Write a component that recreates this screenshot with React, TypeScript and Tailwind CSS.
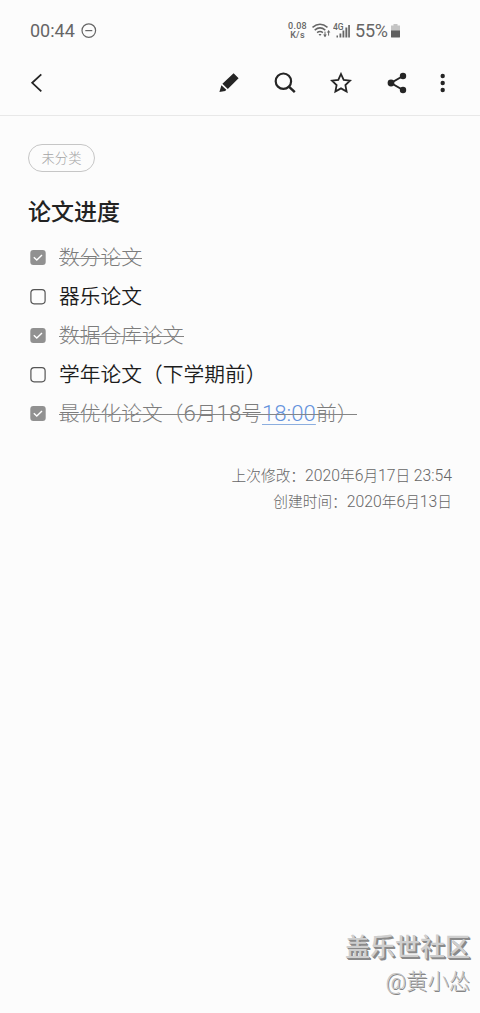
import React from 'react';

interface NoteItem {
  text: string;
  link?: string;
  tail?: string;
  done: boolean;
}

const ITEMS: NoteItem[] = [
  { text: '数分论文', done: true },
  { text: '器乐论文', done: false },
  { text: '数据仓库论文', done: true },
  { text: '学年论文（下学期前）', done: false },
  { text: '最优化论文（6月18号', link: '18:00', tail: '前）', done: true },
];

// Latin digits run slightly larger than the CJK glyphs around them
function Mixed({ text }: { text: string }) {
  return (
    <>
      {text.split(/([0-9:]+)/).map((part, i) =>
        i % 2 ? (
          <span key={i} className="text-[1.07em] leading-none">
            {part}
          </span>
        ) : (
          part
        )
      )}
    </>
  );
}

function StatusBar() {
  return (
    <div className="flex h-[50px] items-center pt-3 text-[#666]">
      <span className="ml-[30px] w-[45px] whitespace-nowrap text-[18px] leading-none">00:44</span>
      <svg className="ml-[6px]" width="16" height="16" viewBox="0 0 16 16" fill="none" stroke="currentColor" strokeWidth="1.2">
        <circle cx="7.8" cy="7.6" r="6.8" />
        <path d="M4.3 7.6h7" />
      </svg>
      <div className="ml-[190px] w-[21px] text-center text-[9px] leading-[9px] font-medium tracking-[0.3px]">
        <div>0.08</div>
        <div>K/s</div>
      </div>
      <svg className="ml-[4px]" width="20" height="16" viewBox="0 0 20 16" fill="none" stroke="currentColor" strokeWidth="1.5">
        <path d="M0.5 4.3Q8-1.9 15.5 4.3M2.7 7.1q5.3-4.4 10.6 0M5.1 9.6q2.9-2.3 5.8 0" />
        <path d="M6.5 10.9h3L8 12.9z" fill="currentColor" stroke="none" />
        <path d="M13 8.6v5M16.6 7.6v5" strokeWidth="1" />
        <path d="M11.2 11.6h3.6L13 14.2zM14.8 9.6h3.6l-1.8-2.4z" fill="currentColor" stroke="none" />
      </svg>
      <svg className="ml-[1px]" width="18" height="16" viewBox="0 0 18 16" fill="currentColor">
        <text x="0" y="7" fontSize="8.5" fontWeight="500">4G</text>
        <path d="M3.5 12.5H5v2H3.5zM6.5 10.5h1.8v4H6.5zM9.5 7.5h1.8v7H9.5zM12.4 4.5h1.9v10h-1.9zM15.2 2h1.7v12.5h-1.7z" />
      </svg>
      <span className="ml-[4px] w-[34px] whitespace-nowrap text-[18px] leading-none tracking-[-0.2px]">55%</span>
      <svg className="ml-[2px]" width="9" height="14" viewBox="0 0 9 14">
        <path d="M2.5 0h4v1.5H9V7H0V1.5h2.5z" fill="#c4c4c4" />
        <path d="M0 6.5h9V13q0 .5-1 .5H1q-1 0-1-.5z" fill="#606060" />
      </svg>
    </div>
  );
}

function Toolbar() {
  return (
    <header className="flex h-[66px] items-center border-b border-[#e8e8e8] text-[#252525]">
      <svg className="ml-7" width="18" height="22" viewBox="0 0 18 22" fill="none" stroke="currentColor" strokeWidth="1.8">
        <path d="M13.3 2.3 4.2 10.8l9.1 8.5" />
      </svg>
      <svg className="ml-[172px]" width="22" height="22" viewBox="0 0 22 22" fill="currentColor">
        <path d="M15.6 1.2 20.6 6.2 9.8 17 4.4 11.8zM3.4 13.2l4.9 4.6-1.1 1.3-5.8 1z" />
      </svg>
      <svg className="ml-[34px]" width="22" height="22" viewBox="0 0 22 22" fill="none" stroke="currentColor" strokeWidth="2.2">
        <circle cx="9.4" cy="9.2" r="7.7" />
        <path d="m14.6 14.4 6.2 5.8" strokeWidth="2.5" />
      </svg>
      <svg className="ml-[34px]" width="22" height="22" viewBox="0 0 22 22" fill="none" stroke="currentColor" strokeWidth="1.8">
        <path d="m11 2 2.7 5.9 6.4.7-4.7 4.5 1.2 6.5L11 16.4l-5.6 3.2 1.2-6.5-4.7-4.5 6.4-.7z" />
      </svg>
      <svg className="ml-[34px]" width="22" height="22" viewBox="0 0 22 22" fill="currentColor">
        <path d="M17 4 5 11l12 7" fill="none" stroke="currentColor" strokeWidth="2" />
        <circle cx="17" cy="4" r="3.2" />
        <circle cx="5" cy="11" r="3.4" />
        <circle cx="17" cy="18" r="3.2" />
      </svg>
      <svg className="ml-[32px]" width="6" height="22" viewBox="0 0 6 22" fill="currentColor">
        <circle cx="2.7" cy="4" r="2.2" />
        <circle cx="2.7" cy="11" r="2.2" />
        <circle cx="2.7" cy="18" r="2.2" />
      </svg>
    </header>
  );
}

function Check({ done }: { done: boolean }) {
  return (
    <svg className="shrink-0" width="16" height="16" viewBox="0 0 16 16" fill="none">
      {done ? (
        <>
          <rect x="0.3" y="0" width="15.4" height="15" rx="3" fill="#919191" />
          <path d="m3.8 7.2 3 2.9 5.2-5.1" stroke="#fff" strokeWidth="1.4" />
        </>
      ) : (
        <rect x="0.9" y="0.6" width="14.2" height="14.2" rx="3.2" stroke="#555" strokeWidth="1.2" />
      )}
    </svg>
  );
}

function Row({ item }: { item: NoteItem }) {
  return (
    <li className="flex h-[39px] items-center">
      <Check done={item.done} />
      <div
        className={
          'relative ml-[13px] h-[39px] pt-px text-[20.75px] leading-[39px] whitespace-nowrap ' +
          (item.done ? 'font-light text-[#7c7c7c]' : 'font-[350] text-[#1c1c1c]')
        }
      >
        <Mixed text={item.text} />
        {item.link && (
          <span className="text-[#6593dc] underline decoration-[#8caedf] decoration-1 underline-offset-[3px]">
            <Mixed text={item.link} />
          </span>
        )}
        {item.tail}
        {item.done && <span className="absolute top-[20px] left-0 h-px w-full bg-[#858585]" />}
      </div>
    </li>
  );
}

export default function App() {
  return (
    <div className="relative h-[1013px] w-[480px] overflow-hidden bg-[#fcfcfc] font-[Roboto,'Noto_Sans_CJK_SC',sans-serif]">
      <StatusBar />
      <Toolbar />
      <main className="pt-[28px] pr-7 pl-7">
        <span className="flex h-[28px] w-[67px] items-center justify-center rounded-full border border-[#c6c6c6] pt-px text-[13.3px] font-light text-[#a4a4a4]">
          未分类
        </span>
        <h1 className="mt-[25px] text-[23px] leading-[32px] font-medium text-[#222]">论文进度</h1>
        <ul className="mt-[9px] ml-[2px]">
          {ITEMS.map(item => (
            <Row key={item.text} item={item} />
          ))}
        </ul>
        <div className="mt-[30px] text-right text-[14.7px] leading-[26px] font-light text-[#666]">
          <p><Mixed text="上次修改：2020年6月17日 23:54" /></p>
          <p><Mixed text="创建时间：2020年6月13日" /></p>
        </div>
      </main>
      {/* Community watermark */}
      <div className="absolute right-[10px] bottom-[15px] text-right whitespace-nowrap">
        <div className="text-[25px] leading-[35px] font-medium text-[#cfcfcf] [text-shadow:1px_1px_0_#8a8a8a,2px_2px_0_#8a8a8a]">
          盖乐世社区
        </div>
        <div className="text-[21.3px] leading-[33px] font-light text-[#c4c4c4] [text-shadow:1px_1px_0_#858585]">
          <span className="text-[22.5px] leading-none">@</span>黄小怂
        </div>
      </div>
    </div>
  );
}
